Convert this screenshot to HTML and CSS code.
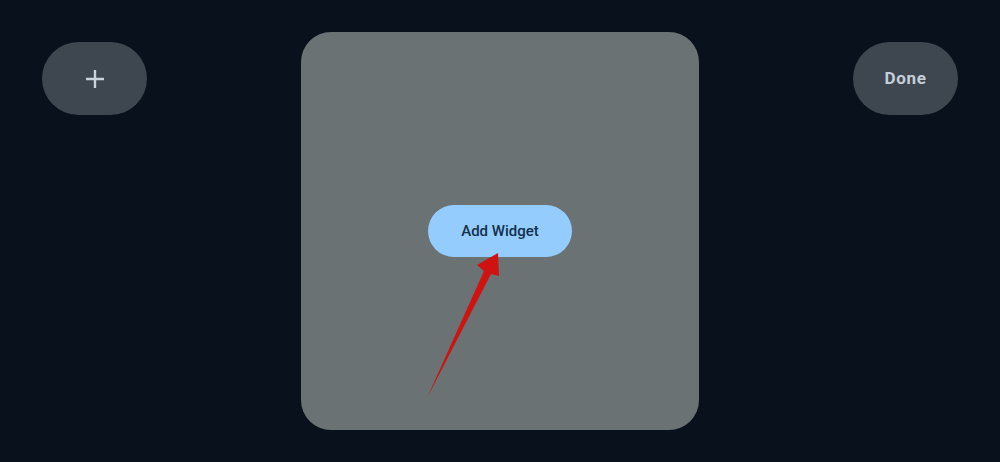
FILE: index.html
```html
<!DOCTYPE html>
<html lang="en">
<head>
  <meta charset="UTF-8" />
  <meta name="viewport" content="width=device-width, initial-scale=1.0"/>
  <title>Edit widgets</title>
  <link rel="stylesheet" href="styles.css">
</head>
<body>

<main class="editor">
  <button class="pill pill-add" aria-label="Add">
    <svg width="20" height="20" viewBox="0 0 20 20">
      <path d="M10 1v18M1 10h18" stroke="#c9d3dd" stroke-width="2.4" fill="none"/>
    </svg>
  </button>

  <section class="panel">
    <button class="add-widget">Add Widget</button>
    <!-- annotation arrow drawn over the panel -->
    <svg class="arrow" width="398" height="398" viewBox="0 0 398 398">
      <polygon points="126,366 183,239 176,233 197,221 198,244 190,242" fill="#cf1212"/>
    </svg>
  </section>

  <button class="pill pill-done">Done</button>
</main>

</body>
</html>
```

FILE: styles.css
```css
* { box-sizing: border-box; }

body {
  margin: 0;
  background: #09121c;
  font-family: Roboto, 'Noto Sans', sans-serif;
  height: 462px;
  overflow: hidden;
}

.editor {
  display: grid;
  grid-template-columns: 1fr auto 1fr;
  align-items: start;
  padding: 0 42px;
}

.pill {
  width: 105px;
  height: 73px;
  margin-top: 42px;
  border: none;
  border-radius: 37px;
  background: #3e4750;
  display: flex;
  align-items: center;
  justify-content: center;
  cursor: pointer;
}

.pill-add { justify-self: start; }

.pill-done {
  justify-self: end;
  padding-bottom: 2px;
  color: #c6ced8;
  font-family: Roboto, sans-serif;
  font-size: 17px;
  font-weight: 700;
  letter-spacing: 0.7px;
}

.panel {
  position: relative;
  width: 398px;
  height: 398px;
  margin-top: 32px;
  background: #6b7274;
  border-radius: 30px;
  display: flex;
  align-items: center;
  justify-content: center;
}

.add-widget {
  width: 144px;
  height: 52px;
  border: none;
  border-radius: 26px;
  background: #93ccfd;
  color: #14304c;
  font-family: Roboto, sans-serif;
  font-size: 15px;
  font-weight: 500;
  cursor: pointer;
}

.arrow {
  position: absolute;
  left: 0;
  top: 0;
  pointer-events: none;
}
```
